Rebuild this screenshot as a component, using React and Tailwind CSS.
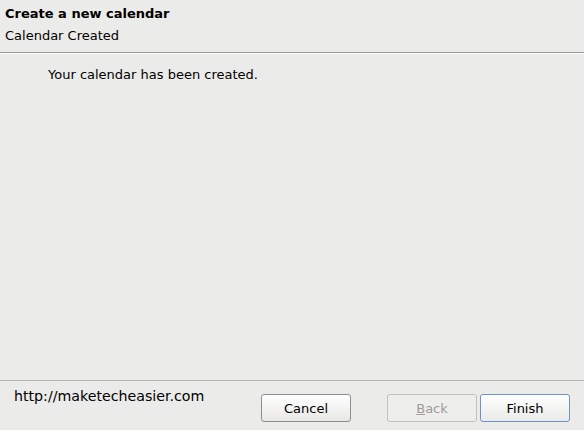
export default function App() {
  const font = { fontFamily: '"DejaVu Sans", Verdana, sans-serif' };
  return (
    <div className="w-[584px] h-[430px] bg-[#ebebe9] flex flex-col text-[13px] text-black overflow-hidden" style={font}>
      <div className="px-[5px] pt-[5px] h-[52px]">
        <div className="font-bold leading-[18px]">Create a new calendar</div>
        <div className="leading-[18px] mt-[4px]">Calendar Created</div>
      </div>
      <div className="h-px bg-[#9a9a9a]" />
      <div className="h-px bg-[#ffffff]" />
      <div className="flex-1 pl-[48px] pt-[12px]">
        <div className="leading-[18px]">Your calendar has been created.</div>
      </div>
      <div className="h-px bg-[#b4b4b2]" />
      <div className="h-[49px] flex pl-[14px] pr-[14px]">
        <div className="pt-[6px] leading-[18px] flex-1 text-[14.2px]">http://maketecheasier.com</div>
        <div className="flex pt-[13px] gap-0">
          <button className="w-[90px] h-[28px] rounded-[3px] border border-[#8e8e8c] bg-gradient-to-b from-[#ffffff] to-[#e8e8e6] text-[13px] leading-none text-black">Cancel</button>
          <button className="ml-[36px] w-[90px] h-[28px] rounded-[3px] border border-[#c2c2c0] bg-[#eeeeec] text-[13px] leading-none text-[#9c9c9a]"><span className="underline">B</span>ack</button>
          <button className="ml-[3px] w-[90px] h-[28px] rounded-[3px] border border-[#6f93c6] bg-gradient-to-b from-[#ffffff] to-[#eaeae8] text-[13px] leading-none text-black">Finish</button>
        </div>
      </div>
    </div>
  );
}
